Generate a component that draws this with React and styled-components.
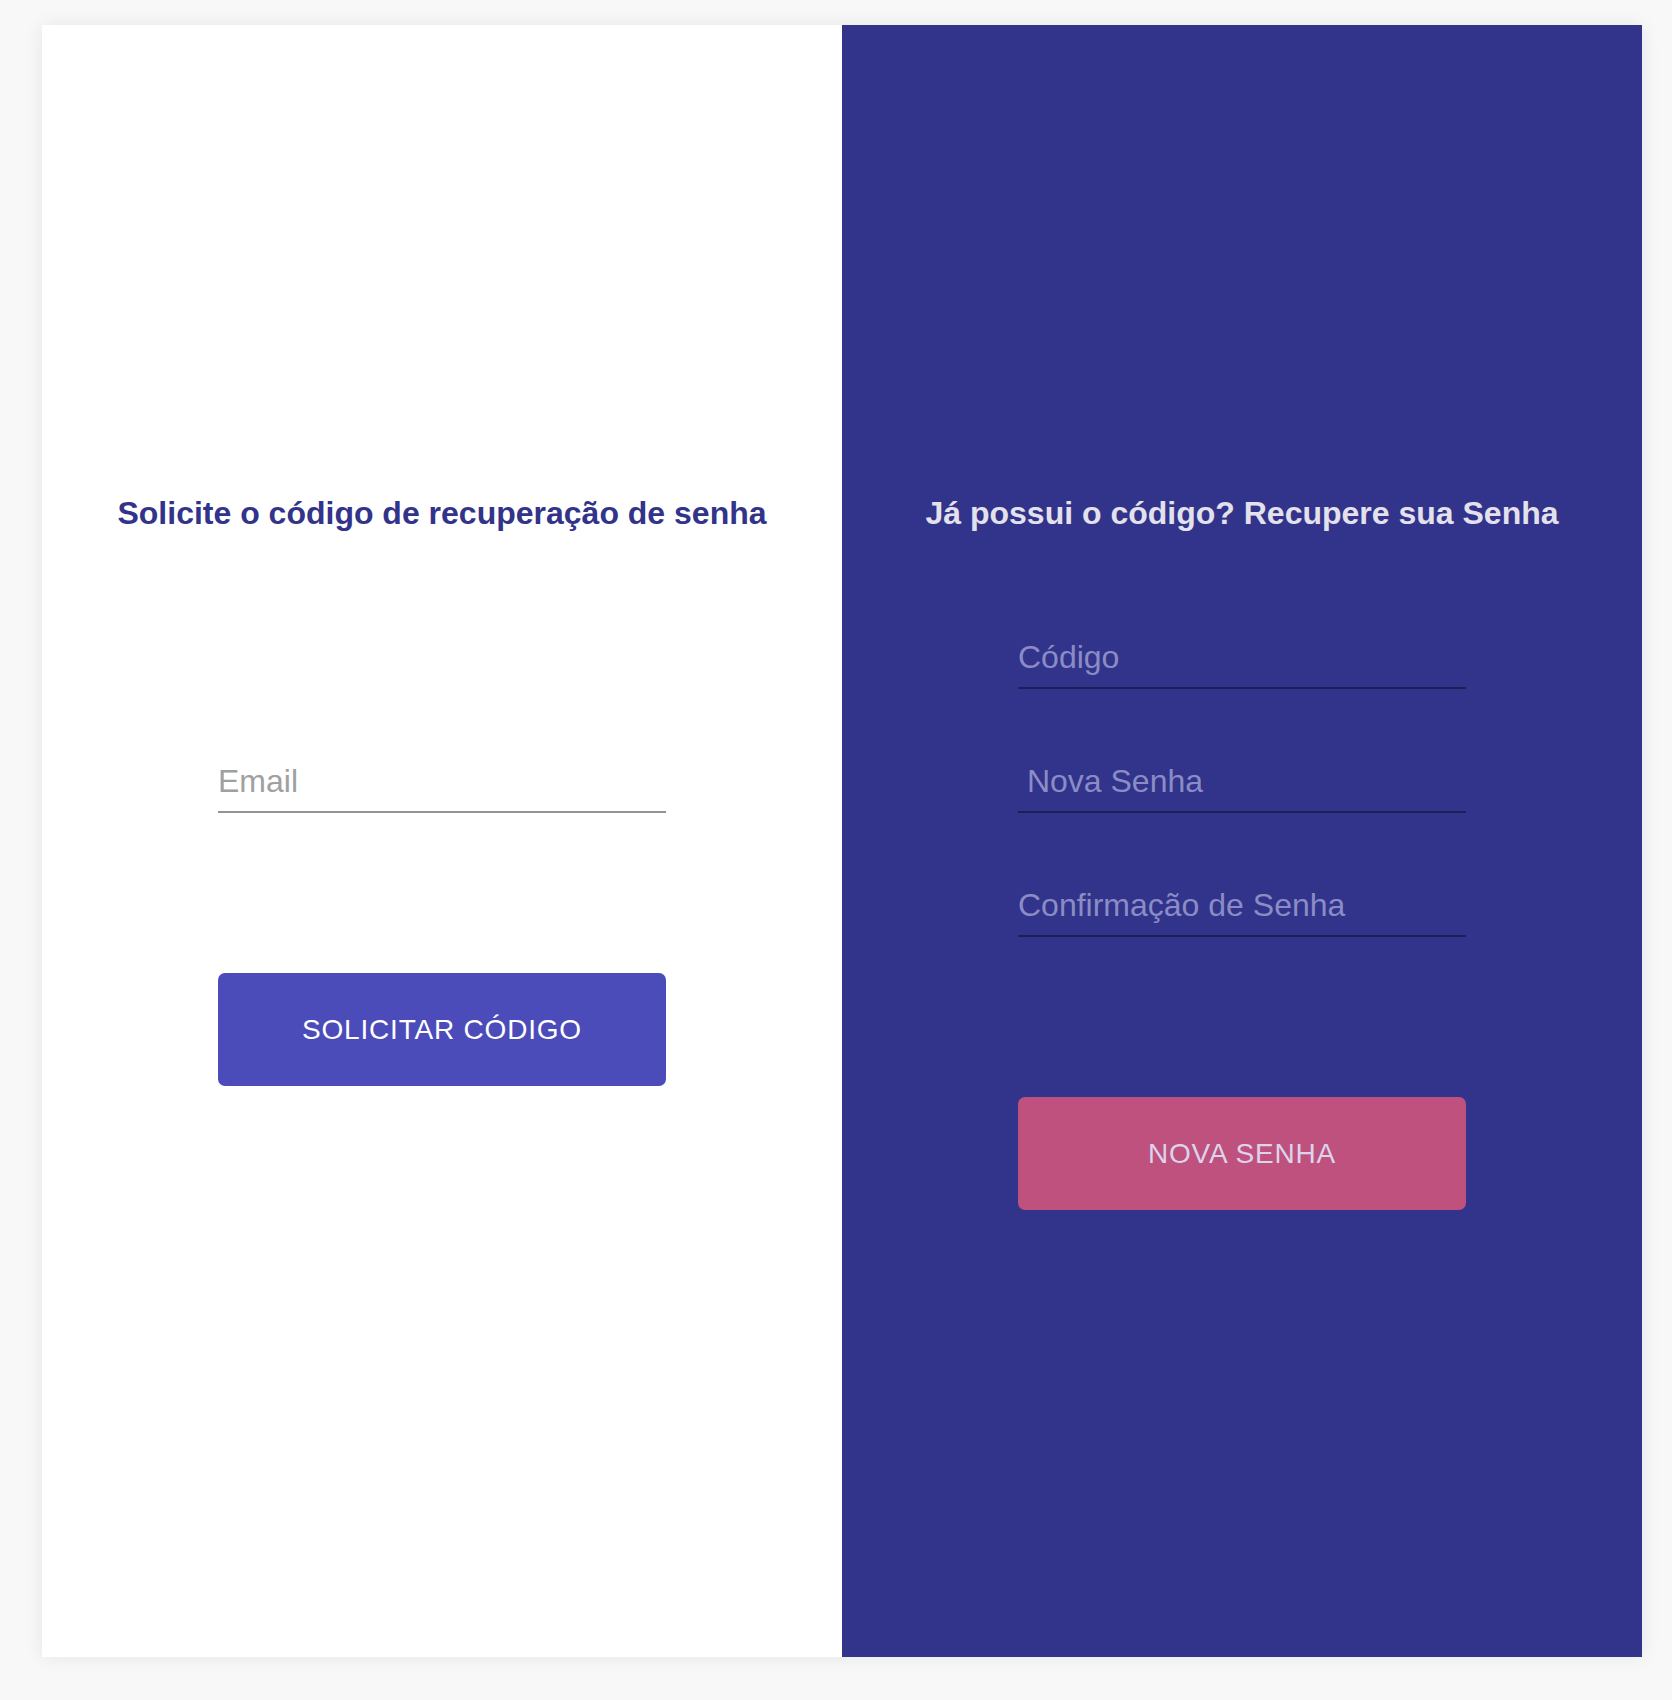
import React from "react";
import styled, { createGlobalStyle } from "styled-components";

const Global = createGlobalStyle`
  html, body { margin: 0; padding: 0; background: #f8f8f8; }
  body { font-family: "Liberation Sans", Arial, Helvetica, sans-serif; }
  * { box-sizing: border-box; }
`;

const Page = styled.div`
  padding: 25px 30px 43px 42px;
  min-height: 1700px;
`;

const Card = styled.div`
  display: grid;
  grid-template-columns: 800px 800px;
  height: 1632px;
  width: 1600px;
  box-shadow: 0 0 18px rgba(0, 0, 0, 0.08);
`;

const Panel = styled.section`
  display: flex;
  flex-direction: column;
  align-items: center;
  padding-top: 468px;
  background: ${(p) => (p.$dark ? "#32338a" : "#ffffff")};
`;

const Title = styled.h2`
  margin: 0;
  font-size: 32px;
  line-height: 40px;
  font-weight: 700;
  color: ${(p) => (p.$light ? "#e3e1ec" : "#32338a")};
`;

const Form = styled.form`
  display: flex;
  flex-direction: column;
  width: 448px;
  margin-top: ${(p) => p.$top}px;
  gap: 72px;
`;

const Input = styled.input`
  display: block;
  width: 100%;
  height: 52px;
  padding: 0 0 10px 0;
  border: none;
  border-bottom: 2px solid ${(p) => (p.$dark ? "#1f1f55" : "#949494")};
  background: transparent;
  font-family: "Liberation Sans", Arial, Helvetica, sans-serif;
  font-size: 32px;
  line-height: 40px;
  outline: none;
  color: ${(p) => (p.$dark ? "#e3e1ec" : "#333")};
  &::placeholder {
    color: ${(p) => (p.$dark ? "#8a8cc6" : "#a0a0a0")};
    opacity: 1;
  }
`;

const Button = styled.button`
  margin-top: ${(p) => p.$top}px;
  width: 448px;
  height: 113px;
  border: none;
  border-radius: 7px;
  background: ${(p) => (p.$pink ? "#bf517f" : "#4b4bba")};
  color: ${(p) => (p.$pink ? "#dcd4ea" : "#ffffff")};
  font-family: "Liberation Sans", Arial, Helvetica, sans-serif;
  font-size: 28px;
  letter-spacing: 0.8px;
  text-transform: uppercase;
  cursor: pointer;
`;

export default function App() {
  return (
    <>
      <Global />
      <Page>
        <Card>
          <Panel>
            <Title>Solicite o código de recuperação de senha</Title>
            <Form $top={228}>
              <Input type="email" placeholder="Email" />
            </Form>
            <Button $top={160}>Solicitar Código</Button>
          </Panel>
          <Panel $dark>
            <Title $light>Já possui o código? Recupere sua Senha</Title>
            <Form $top={104}>
              <Input $dark placeholder="Código" />
              <Input $dark type="password" placeholder=" Nova Senha" />
              <Input $dark type="password" placeholder="Confirmação de Senha" />
            </Form>
            <Button $pink $top={160}>Nova Senha</Button>
          </Panel>
        </Card>
      </Page>
    </>
  );
}
